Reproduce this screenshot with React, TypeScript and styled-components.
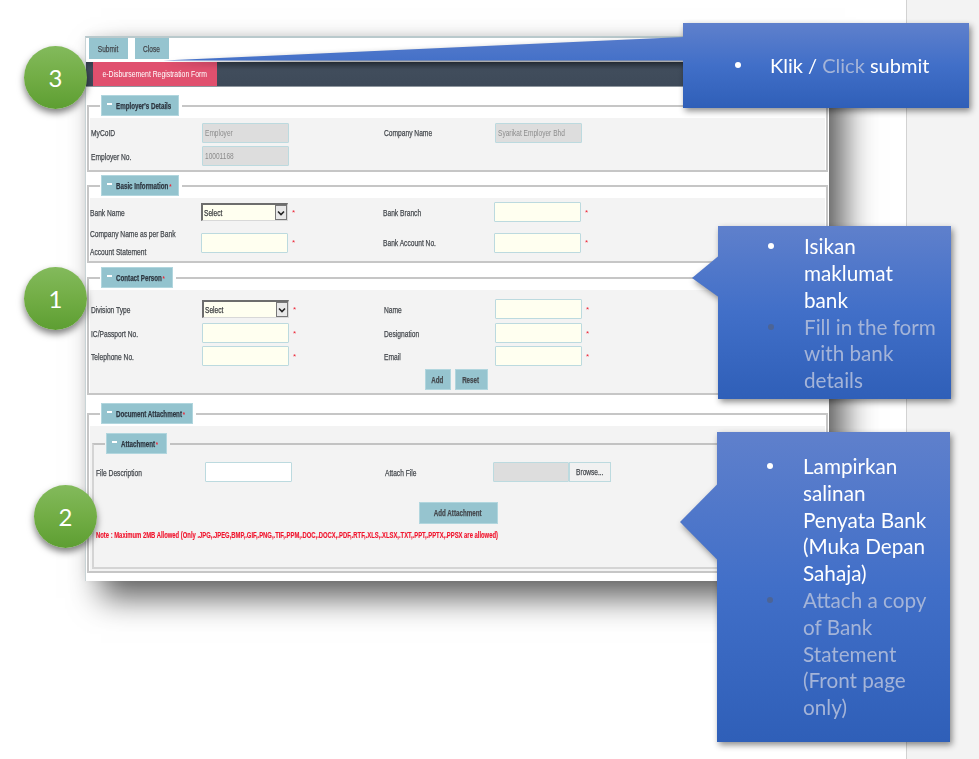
import React from "react";
import styled, { createGlobalStyle } from "styled-components";

const Global = createGlobalStyle`
  html, body { margin: 0; padding: 0; background: #fff; }
  #root { width: 979px; height: 759px; overflow: hidden; }
`;

const Page = styled.div`
  display: flex;
  width: 979px;
  height: 759px;
`;
const Slide = styled.div`
  position: relative;
  width: 906px;
  height: 759px;
  background: #fff;
  overflow: hidden;
`;
const SidePane = styled.div`
  flex: 1;
  background: #f3f3f3;
  border-left: 1px solid #d2d2d2;
`;

const FormWindow = styled.div`
  position: absolute;
  left: 85px;
  top: 36px;
  width: 744px;
  height: 545px;
  box-sizing: border-box;
  background: #fff;
  border-top: 2px solid #b9c9cc;
  border-left: 1px solid #c9d4d6;
  box-shadow: 16px 17px 30px rgba(0, 0, 0, 0.62), 0 -2px 10px rgba(0, 0, 0, 0.08);
  font-family: "Liberation Sans", sans-serif;
  font-size: 9px;
  color: #44484d;
  -webkit-text-stroke: 0.25px #44484d;
  filter: blur(0.45px);
`;
const Squeeze = styled.span<{ $left?: boolean; $x?: number }>`
  display: inline-block;
  white-space: nowrap;
  transform: scaleX(${(p) => p.$x ?? 0.73});
  transform-origin: ${(p) => (p.$left ? "left" : "center")} center;
`;
const Toolbar = styled.div`
  display: flex;
  gap: 7px;
  height: 24px;
  padding-left: 3px;
`;
const ToolButton = styled.div<{ $w: number }>`
  width: ${(p) => p.$w}px;
  height: 21px;
  display: flex;
  align-items: center;
  justify-content: center;
  background: #96c4cf;
`;
const HeaderBar = styled.div`
  height: 24px;
  padding-left: 7px;
  background: linear-gradient(#333d4a, #414d5c 30%, #3e4a59);
  border-bottom: 1px solid #8f979f;
`;
const HeaderTab = styled.div`
  width: 124px;
  height: 24px;
  background: #e0506e;
  color: #fff;
  -webkit-text-stroke: 0;
  display: flex;
  align-items: center;
  justify-content: center;
`;
const Body = styled.div`
  display: flex;
  flex-direction: column;
  padding: 8px 1px 0 1px;
`;
const Group = styled.fieldset<{ $gap?: number; $inner?: boolean }>`
  margin: ${(p) => p.$gap ?? 0}px 0 0 0;
  padding: 0;
  min-width: 0;
  border: 2px solid ${(p) => (p.$inner ? "#d4d4d4" : "#c6c6c6")};
  border-top-color: ${(p) => (p.$inner ? "#c2c2c2" : "#c6c6c6")};
`;
const GroupLegend = styled.legend<{ $left?: number }>`
  margin-left: ${(p) => p.$left ?? 11}px;
  padding: 0 3px 0 1px;
`;
const LegendChip = styled.div<{ $w: number }>`
  position: relative;
  width: ${(p) => p.$w}px;
  height: 21px;
  box-sizing: border-box;
  padding-left: 14px;
  display: flex;
  align-items: center;
  background: #93c3ce;
  border: 1px solid #b1d6de;
  color: #2d3640;
  -webkit-text-stroke: 0.25px #2d3640;
  font-size: 8.5px;
  font-weight: bold;
  white-space: nowrap;
  &::before {
    content: "";
    position: absolute;
    left: 5px;
    top: 7px;
    width: 5px;
    height: 2px;
    background: #fff;
  }
`;
const Star = styled.span`
  color: #ee2233;
  -webkit-text-stroke: 0;
  font-size: 8px;
  margin-left: 1px;
`;
const Panel = styled.div<{ $top: number; $bottom: number; $inset?: number }>`
  margin: 2px 1px 0;
  padding: ${(p) => p.$top}px 0 ${(p) => p.$bottom}px ${(p) => p.$inset ?? 1}px;
  background: #f3f3f3;
  display: flex;
  flex-direction: column;
`;
const Row = styled.div<{ $h?: number; $gap?: number; $cols?: string }>`
  display: grid;
  grid-template-columns: ${(p) => p.$cols ?? "111px 182px 111px 1fr"};
  align-items: center;
  height: ${(p) => p.$h ?? 20}px;
  margin-top: ${(p) => p.$gap ?? 0}px;
`;
const Label = styled.div<{ $tall?: boolean }>`
  line-height: ${(p) => (p.$tall ? "18px" : "normal")};
  margin-top: 1px;
  white-space: nowrap;
  transform: scaleX(0.74);
  transform-origin: left center;
`;
const Field = styled.div`
  display: flex;
  align-items: center;
  gap: 3px;
`;
const TextBox = styled.div<{ $tone?: "req" | "off" | "plain"; $w?: number }>`
  width: ${(p) => p.$w ?? 87}px;
  height: 20px;
  box-sizing: border-box;
  display: flex;
  align-items: center;
  padding-left: 2px;
  border: 1.5px solid #bcdadf;
  border-radius: 1px;
  color: #8c8c8c;
  -webkit-text-stroke: 0;
  white-space: nowrap;
  background: ${(p) =>
    p.$tone === "off" ? "#dddddd" : p.$tone === "plain" ? "#ffffff" : "#fffff0"};
`;
const SelectBox = styled.div`
  width: 87px;
  height: 18px;
  box-sizing: border-box;
  display: flex;
  align-items: stretch;
  background: #fffff0;
  border-top: 2px solid #6d6d6d;
  border-left: 2px solid #6d6d6d;
  border-right: 1px solid #d8d8d8;
  border-bottom: 1px solid #d8d8d8;
  color: #2d2d2d;
`;
const SelectValue = styled.div`
  flex: 1;
  display: flex;
  align-items: center;
  padding-left: 1px;
`;
const SelectArrow = styled.div`
  width: 10px;
  display: flex;
  align-items: center;
  justify-content: center;
  background: #e8e8e8;
  border: 1px solid #777;
`;
const ButtonRow = styled.div<{ $gap: number; $shift?: number }>`
  display: flex;
  justify-content: center;
  gap: 4px;
  margin-top: ${(p) => p.$gap}px;
  transform: translateX(${(p) => p.$shift ?? 0}px);
`;
const FormButton = styled.div<{ $w: number; $h?: number }>`
  width: ${(p) => p.$w}px;
  height: ${(p) => p.$h ?? 21}px;
  background: #96c4cf;
  border: 1px solid #b1d6de;
  box-sizing: border-box;
  display: flex;
  align-items: center;
  justify-content: center;
  font-weight: bold;
  font-size: 8.5px;
`;
const FileWrap = styled.div`
  display: flex;
`;
const BrowseButton = styled.div`
  width: 42px;
  height: 20px;
  box-sizing: border-box;
  background: #f1f1f1;
  border: 1.5px solid #bcdadf;
  display: flex;
  align-items: center;
  justify-content: center;
`;
const Note = styled.div`
  margin-top: 6px;
  color: #f0142d;
  -webkit-text-stroke: 0.15px #f0142d;
  font-size: 8.4px;
  font-weight: bold;
  white-space: nowrap;
  transform: scaleX(0.7);
  transform-origin: left center;
`;

const Badge = styled.div<{ $x: number; $y: number }>`
  position: absolute;
  left: ${(p) => p.$x}px;
  top: ${(p) => p.$y}px;
  width: 63px;
  height: 63px;
  border-radius: 50%;
  display: flex;
  align-items: center;
  justify-content: center;
  color: #fff;
  font-family: Lato, sans-serif;
  font-size: 24px;
  background: linear-gradient(#83ba5c, #72ad45 50%, #5d9e32);
  box-shadow: 0 4px 7px rgba(0, 0, 0, 0.5);
`;

const Callout = styled.div<{ $x: number; $y: number; $w: number; $h: number }>`
  position: absolute;
  left: ${(p) => p.$x}px;
  top: ${(p) => p.$y}px;
  width: ${(p) => p.$w}px;
  height: ${(p) => p.$h}px;
  filter: drop-shadow(2px 3px 3px rgba(0, 0, 0, 0.45));
`;
const CalloutFace = styled.div<{ $bullet: number; $text: number; $nudge?: number }>`
  position: relative;
  height: 100%;
  box-sizing: border-box;
  padding-left: ${(p) => p.$text}px;
  padding-top: ${(p) => p.$nudge ?? 0}px;
  display: flex;
  align-items: center;
  background: linear-gradient(#5f80cc, #416fc8 50%, #2f5fb8);
  --bullet: ${(p) => p.$bullet}px;
`;
const PointerArt = styled.svg`
  position: absolute;
  left: 0;
  top: 0;
  width: 100%;
  height: 100%;
  overflow: visible;
`;
const CalloutList = styled.ul<{ $size: number }>`
  list-style: none;
  margin: 0;
  padding: 0;
  font-family: Lato, sans-serif;
  font-size: ${(p) => p.$size}px;
  line-height: 26.8px;
  color: #fff;
  white-space: nowrap;
`;
const CalloutItem = styled.li<{ $dim?: boolean }>`
  position: relative;
  color: ${(p) => (p.$dim ? "#a4b4d8" : "#ffffff")};
  &::before {
    content: "";
    position: absolute;
    left: var(--bullet);
    top: 10px;
    width: 6px;
    height: 6px;
    border-radius: 50%;
    background: ${(p) => (p.$dim ? "#4c6496" : "#ffffff")};
  }
`;
const Dim = styled.span`
  color: #a4b4d8;
`;

const Pointer = ({ id, h, points }: { id: string; h: number; points: string }) => (
  <PointerArt aria-hidden="true">
    <defs>
      <linearGradient id={id} gradientUnits="userSpaceOnUse" x1="0" y1="0" x2="0" y2={h}>
        <stop offset="0" stopColor="#5f80cc" />
        <stop offset="0.5" stopColor="#416fc8" />
        <stop offset="1" stopColor="#2f5fb8" />
      </linearGradient>
    </defs>
    <polygon points={points} fill={`url(#${id})`} />
  </PointerArt>
);

const Chevron = () => (
  <svg width="8" height="6" viewBox="0 0 8 6" aria-hidden="true">
    <path d="M1 1.5 L4 4.5 L7 1.5" fill="none" stroke="#222" strokeWidth="1.6" />
  </svg>
);

const Select = () => (
  <SelectBox>
    <SelectValue>
      <Squeeze $left>Select</Squeeze>
    </SelectValue>
    <SelectArrow>
      <Chevron />
    </SelectArrow>
  </SelectBox>
);

const Req = () => <Star>*</Star>;

export default function App() {
  return (
    <Page>
      <Global />
      <Slide>
        <FormWindow>
          <Toolbar>
            <ToolButton $w={39}>
              <Squeeze>Submit</Squeeze>
            </ToolButton>
            <ToolButton $w={34}>
              <Squeeze>Close</Squeeze>
            </ToolButton>
          </Toolbar>
          <HeaderBar>
            <HeaderTab>
              <Squeeze $x={0.76}>e-Disbursement Registration Form</Squeeze>
            </HeaderTab>
          </HeaderBar>
          <Body>
            <Group>
              <GroupLegend>
                <LegendChip $w={78}>
                  <Squeeze $left>Employer's Details</Squeeze>
                </LegendChip>
              </GroupLegend>
              <Panel $top={4} $bottom={4}>
                <Row $h={21}>
                  <Label>MyCoID</Label>
                  <Field>
                    <TextBox $tone="off">
                      <Squeeze $left>Employer</Squeeze>
                    </TextBox>
                  </Field>
                  <Label>Company Name</Label>
                  <Field>
                    <TextBox $tone="off">
                      <Squeeze $left>Syarikat Employer Bhd</Squeeze>
                    </TextBox>
                  </Field>
                </Row>
                <Row $gap={3}>
                  <Label>Employer No.</Label>
                  <Field>
                    <TextBox $tone="off">
                      <Squeeze $left>10001168</Squeeze>
                    </TextBox>
                  </Field>
                </Row>
              </Panel>
            </Group>
            <Group $gap={3}>
              <GroupLegend>
                <LegendChip $w={78}>
                  <Squeeze $left>
                    Basic Information
                    <Req />
                  </Squeeze>
                </LegendChip>
              </GroupLegend>
              <Panel $top={4} $bottom={1} $inset={0}>
                <Row>
                  <Label>Bank Name</Label>
                  <Field>
                    <Select />
                    <Req />
                  </Field>
                  <Label>Bank Branch</Label>
                  <Field>
                    <TextBox />
                    <Req />
                  </Field>
                </Row>
                <Row $h={36} $gap={2}>
                  <Label $tall>
                    Company Name as per Bank
                    <br />
                    Account Statement
                  </Label>
                  <Field>
                    <TextBox />
                    <Req />
                  </Field>
                  <Label>Bank Account No.</Label>
                  <Field>
                    <TextBox />
                    <Req />
                  </Field>
                </Row>
              </Panel>
            </Group>
            <Group $gap={4}>
              <GroupLegend>
                <LegendChip $w={72}>
                  <Squeeze $left>
                    Contact Person
                    <Req />
                  </Squeeze>
                </LegendChip>
              </GroupLegend>
              <Panel $top={9} $bottom={3}>
                <Row>
                  <Label>Division Type</Label>
                  <Field>
                    <Select />
                    <Req />
                  </Field>
                  <Label>Name</Label>
                  <Field>
                    <TextBox />
                    <Req />
                  </Field>
                </Row>
                <Row $gap={4}>
                  <Label>IC/Passport No.</Label>
                  <Field>
                    <TextBox />
                    <Req />
                  </Field>
                  <Label>Designation</Label>
                  <Field>
                    <TextBox />
                    <Req />
                  </Field>
                </Row>
                <Row $gap={3}>
                  <Label>Telephone No.</Label>
                  <Field>
                    <TextBox />
                    <Req />
                  </Field>
                  <Label>Email</Label>
                  <Field>
                    <TextBox />
                    <Req />
                  </Field>
                </Row>
                <ButtonRow $gap={3} $shift={-2}>
                  <FormButton $w={26}>
                    <Squeeze>Add</Squeeze>
                  </FormButton>
                  <FormButton $w={33}>
                    <Squeeze>Reset</Squeeze>
                  </FormButton>
                </ButtonRow>
              </Panel>
            </Group>
            <Group $gap={8}>
              <GroupLegend>
                <LegendChip $w={92}>
                  <Squeeze $left>
                    Document Attachment
                    <Req />
                  </Squeeze>
                </LegendChip>
              </GroupLegend>
              <Panel $top={7} $bottom={2} $inset={2}>
                <Group $inner>
                  <GroupLegend $left={11}>
                    <LegendChip $w={61}>
                      <Squeeze $left>
                        Attachment
                        <Req />
                      </Squeeze>
                    </LegendChip>
                  </GroupLegend>
                  <Panel $top={6} $bottom={27} $inset={1}>
                    <Row $cols="109px 180px 108px 1fr">
                      <Label>File Description</Label>
                      <Field>
                        <TextBox $tone="plain" />
                      </Field>
                      <Label>Attach File</Label>
                      <FileWrap>
                        <TextBox $tone="off" $w={76} />
                        <BrowseButton>
                          <Squeeze>Browse...</Squeeze>
                        </BrowseButton>
                      </FileWrap>
                    </Row>
                    <ButtonRow $gap={20} $shift={-1}>
                      <FormButton $w={79} $h={22}>
                        <Squeeze>Add Attachment</Squeeze>
                      </FormButton>
                    </ButtonRow>
                    <Note>
                      Note : Maximum 2MB Allowed (Only .JPG,.JPEG,BMP,.GIF,.PNG,.TIF,.PPM,.DOC,.DOCX,.PDF,.RTF,.XLS,.XLSX,.TXT,.PPT,.PPTX,.PPSX are allowed)
                    </Note>
                  </Panel>
                </Group>
              </Panel>
            </Group>
          </Body>
        </FormWindow>

        <Badge $x={24} $y={46}>3</Badge>
        <Badge $x={24} $y={267}>1</Badge>
        <Badge $x={34} $y={485}>2</Badge>
      </Slide>
      <SidePane />
      <Callout $x={683} $y={23} $w={286} $h={85}>
        <Pointer id="wedgeTop" h={85} points="0.5,14 -520,37.5 0.5,37.5" />
        <CalloutFace $bullet={-35} $text={87}>
          <CalloutList $size={20}>
            <CalloutItem>
              Klik / <Dim>Click</Dim> submit
            </CalloutItem>
          </CalloutList>
        </CalloutFace>
      </Callout>
      <Callout $x={718} $y={226} $w={233} $h={173}>
        <Pointer id="wedgeBank" h={173} points="0.5,30 -26,52 0.5,71" />
        <CalloutFace $bullet={-36} $text={86} $nudge={2}>
          <CalloutList $size={20.7}>
            <CalloutItem>
              Isikan
              <br />
              maklumat
              <br />
              bank
            </CalloutItem>
            <CalloutItem $dim>
              Fill in the form
              <br />
              with bank
              <br />
              details
            </CalloutItem>
          </CalloutList>
        </CalloutFace>
      </Callout>
      <Callout $x={717} $y={432} $w={233} $h={310}>
        <Pointer id="wedgeAttach" h={310} points="0.5,52 -37,90 0.5,128" />
        <CalloutFace $bullet={-36} $text={86}>
          <CalloutList $size={20.7}>
            <CalloutItem>
              Lampirkan
              <br />
              salinan
              <br />
              Penyata Bank
              <br />
              (Muka Depan
              <br />
              Sahaja)
            </CalloutItem>
            <CalloutItem $dim>
              Attach a copy
              <br />
              of Bank
              <br />
              Statement
              <br />
              (Front page
              <br />
              only)
            </CalloutItem>
          </CalloutList>
        </CalloutFace>
      </Callout>
    </Page>
  );
}
